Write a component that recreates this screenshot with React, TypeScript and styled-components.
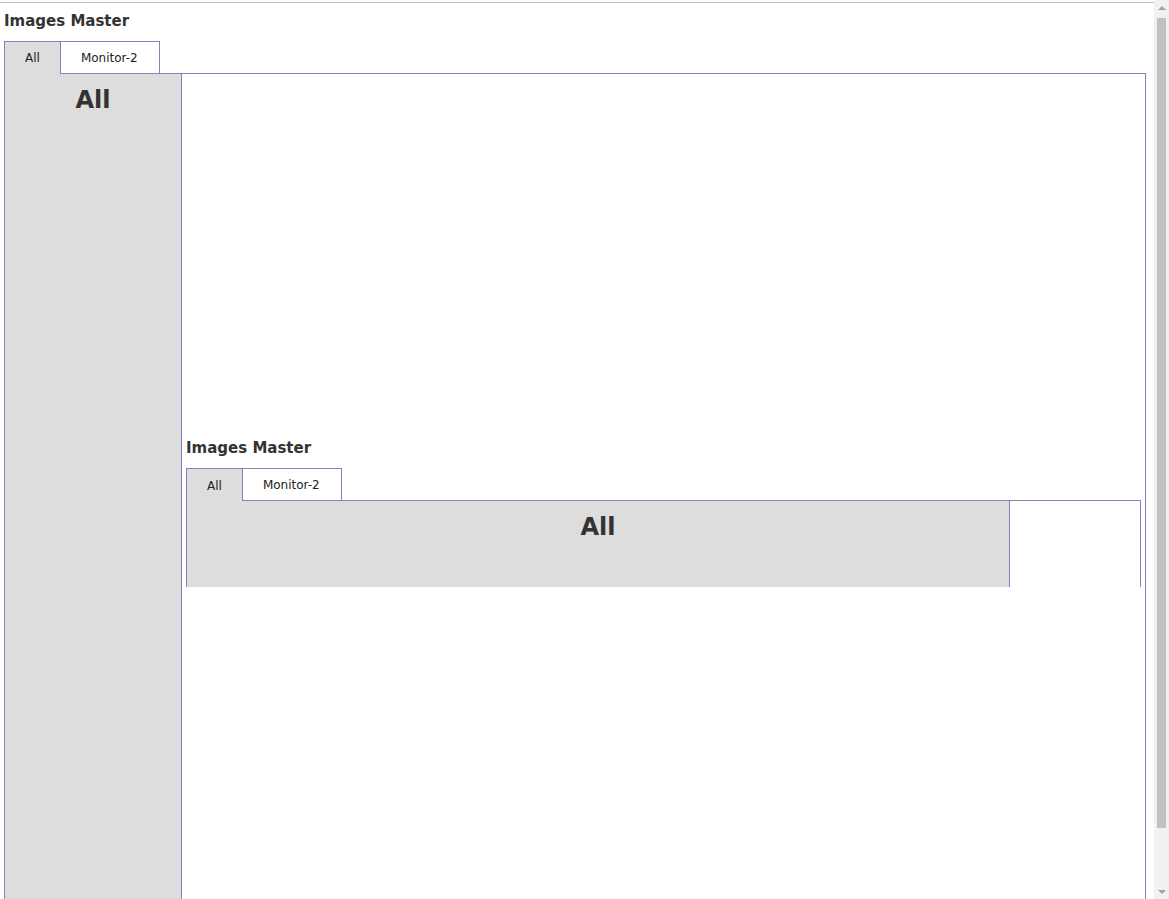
import React, { ReactElement, useState } from 'react';
import styled, { createGlobalStyle } from 'styled-components';

const GlobalStyle = createGlobalStyle`
  html, body {
    margin: 0;
    padding: 0;
    background: #fff;
  }
  body {
    font-family: "DejaVu Sans", Verdana, sans-serif;
    color: #333;
  }
`;

const purple = '#8a7dbf';
const gray = '#dddddd';

const TopRule = styled.div`
  margin-top: 2px;
  margin-right: 15px;
  border-top: 1px solid #b9c2d5;
`;

const Page = styled.div`
  padding: 8px 23px 0 4px;
`;

// browser scrollbar look-alike, fixed over the right edge
const ScrollTrack = styled.div`
  position: fixed;
  top: 0;
  right: 0;
  width: 15px;
  height: 100vh;
  background: #f1f1f1;
  display: flex;
  flex-direction: column;
  align-items: center;
  z-index: 10;
`;

const ScrollArrow = styled.div<{ $down?: boolean }>`
  height: 15px;
  width: 15px;
  display: flex;
  align-items: center;
  justify-content: center;
  &::before {
    content: '';
    border-left: 4px solid transparent;
    border-right: 4px solid transparent;
    ${(p) => (p.$down ? 'border-top: 4px solid #a3a3a3;' : 'border-bottom: 4px solid #a3a3a3;')}
  }
`;

const ScrollThumb = styled.div`
  width: 9px;
  margin-top: 3px;
  height: 810px;
  background: #c1c1c1;
`;

const Widget = styled.section`
  display: flex;
  flex-direction: column;
`;

const Title = styled.h3`
  margin: 1.5px 0 0 0;
  font-size: 15px;
  font-weight: bold;
  line-height: 17.5px;
  color: #333;
`;

const TabBar = styled.div`
  display: flex;
  margin-top: 10.5px;
  position: relative;
  z-index: 1;
`;

const Tab = styled.button<{ $active?: boolean }>`
  box-sizing: border-box;
  padding: 1px ${(p) => (p.$active ? '20px' : '21px')} 0 20px;
  margin: 0 0 -1px 0;
  border: 1px solid ${purple};
  border-bottom: none;
  border-right: ${(p) => (p.$active ? 'none' : `1px solid ${purple}`)};
  background: ${(p) => (p.$active ? gray : '#fff')};
  height: ${(p) => (p.$active ? '33px' : '32px')};
  font-family: "DejaVu Sans", Verdana, sans-serif;
  font-size: 12px;
  color: #222;
  cursor: pointer;
`;

const Panel = styled.div<{ $height: number }>`
  display: flex;
  border: 1px solid ${purple};
  border-bottom: none;
  min-height: ${(p) => p.$height}px;
  box-sizing: border-box;
`;

const Sidebar = styled.div<{ $width: number }>`
  width: ${(p) => p.$width}px;
  flex-shrink: 0;
  background: ${gray};
  border-right: 1px solid ${purple};
  box-sizing: border-box;
  text-align: center;
`;

const Heading = styled.h2`
  margin: 12px 0 0 0;
  font-size: 24px;
  font-weight: bold;
  line-height: 28px;
  color: #333;
`;

const Content = styled.div`
  flex: 1;
  display: flex;
  flex-direction: column;
  padding: 0 4px;
`;

const Empty = styled.div`
  flex: 1;
`;

const Spacer = styled.div`
  height: 365px;
`;

interface ImagesMasterProps {
  panelHeight: number;
  sidebarWidth: number;
  children?: React.ReactNode;
}

function ImagesMaster({ panelHeight, sidebarWidth, children }: ImagesMasterProps): ReactElement {
  const [active, setActive] = useState<string>('All');
  return (
    <Widget>
      <Title>Images Master</Title>
      <TabBar>
        {['All', 'Monitor-2'].map((name) => (
          <Tab key={name} $active={active === name} onClick={() => setActive(name)}>
            {name}
          </Tab>
        ))}
      </TabBar>
      <Panel $height={panelHeight}>
        <Sidebar $width={sidebarWidth}>
          <Heading>All</Heading>
        </Sidebar>
        {children ? <Content>{children}</Content> : <Empty />}
      </Panel>
    </Widget>
  );
}

export default function App(): ReactElement {
  return (
    <>
      <GlobalStyle />
      <TopRule />
      <Page>
        <ImagesMaster panelHeight={890} sidebarWidth={177}>
          <Spacer />
          <ImagesMaster panelHeight={87} sidebarWidth={823} />
        </ImagesMaster>
      </Page>
      <ScrollTrack>
        <ScrollArrow />
        <ScrollThumb />
        <Empty />
        <ScrollArrow $down />
      </ScrollTrack>
    </>
  );
}
